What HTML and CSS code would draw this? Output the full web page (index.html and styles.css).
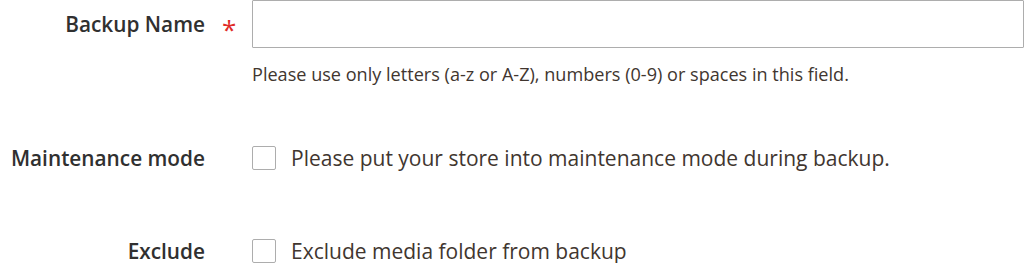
FILE: index.html
```html
<!DOCTYPE html>
<html lang="en">
<head>
    <meta charset="UTF-8">
    <meta name="viewport" content="width=device-width, initial-scale=1.0">
    <title>Backup</title>
    <link rel="stylesheet" href="styles.css">
</head>
<body>
    <form class="backup-form">
        <div class="field field-name">
            <label class="field-label" for="backup-name">Backup Name</label>
            <span class="required">*</span>
            <div class="field-control">
                <input type="text" id="backup-name" class="input-text">
                <div class="field-note">Please use only letters (a-z or A-Z), numbers (0-9) or spaces in this field.</div>
            </div>
        </div>
        <div class="field field-check field-maintenance">
            <div class="field-label">Maintenance mode</div>
            <span class="required"></span>
            <label class="field-control option">
                <input type="checkbox" class="checkbox">
                <span class="option-label">Please put your store into maintenance mode during backup.</span>
            </label>
        </div>
        <div class="field field-check field-exclude">
            <div class="field-label">Exclude</div>
            <span class="required"></span>
            <label class="field-control option">
                <input type="checkbox" class="checkbox">
                <span class="option-label">Exclude media folder from backup</span>
            </label>
        </div>
    </form>
</body>
</html>
```

FILE: styles.css
```css
body {
    font-family: "Open Sans", "Liberation Sans", Arial, sans-serif;
    margin: 0;
    padding: 0;
    background-color: #fff;
    color: #303030;
}
.backup-form {
    margin: 0;
}
.field {
    display: flex;
    align-items: flex-start;
}
.field-label {
    width: 205px;
    flex-shrink: 0;
    text-align: right;
    font-size: 20.8px;
    font-weight: 600;
    line-height: 24px;
    color: #303030;
}
.required {
    width: 47px;
    flex-shrink: 0;
    box-sizing: border-box;
    padding-left: 17px;
    color: #e02b27;
    font-size: 26px;
    line-height: 24px;
}
.field-control {
    flex: 1;
}
.field-name .field-label {
    padding-top: 12px;
}
.field-name .required {
    padding-top: 17px;
}
.input-text {
    display: block;
    width: 100%;
    height: 48px;
    margin: 0;
    border: 1px solid #adadad;
    border-radius: 1px;
    box-sizing: border-box;
    background-color: #fff;
    font-family: inherit;
    font-size: 21px;
    padding: 0 14px;
}
.field-note {
    margin-top: 14px;
    font-size: 18.1px;
    line-height: 24px;
    color: #41362f;
}
.field-maintenance {
    margin-top: 60px;
}
.field-exclude {
    margin-top: 69px;
}
.option {
    display: flex;
    align-items: center;
    cursor: pointer;
}
.checkbox {
    appearance: none;
    -webkit-appearance: none;
    width: 24px;
    height: 24px;
    margin: 0 15px 0 0;
    border: 1px solid #adadad;
    border-radius: 2px;
    background-color: #fff;
    box-sizing: border-box;
    flex-shrink: 0;
}
.option-label {
    font-size: 21px;
    line-height: 24px;
    color: #41362f;
}
```
